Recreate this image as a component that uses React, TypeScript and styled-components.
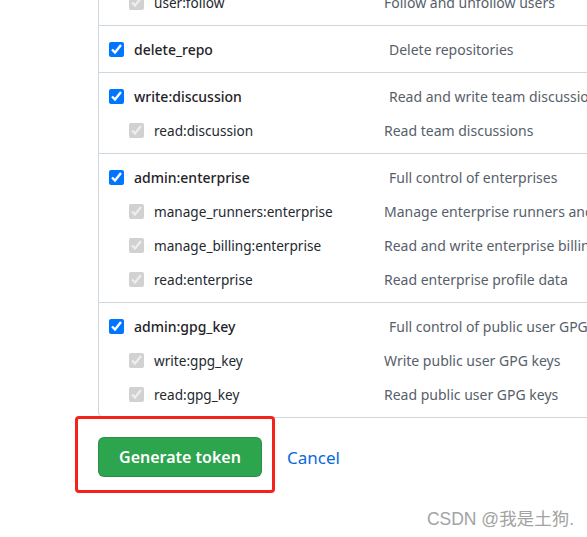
import React from "react";
import styled, { createGlobalStyle } from "styled-components";

const GlobalStyle = createGlobalStyle`
  html, body {
    margin: 0;
    padding: 0;
    background: #ffffff;
    overflow: hidden;
  }
  body {
    font-family: "Noto Sans", "Noto Sans CJK SC", sans-serif;
    color: #24292f;
  }
`;

type Scope = { name: string; desc: string; children?: { name: string; desc: string }[] };

const scopes: Scope[] = [
  {
    name: "user",
    desc: "Update ALL user data",
    children: [
      { name: "read:user", desc: "Read ALL user profile data" },
      { name: "user:email", desc: "Access user email addresses (read-only)" },
      { name: "user:follow", desc: "Follow and unfollow users" },
    ],
  },
  { name: "delete_repo", desc: "Delete repositories" },
  {
    name: "write:discussion",
    desc: "Read and write team discussions",
    children: [{ name: "read:discussion", desc: "Read team discussions" }],
  },
  {
    name: "admin:enterprise",
    desc: "Full control of enterprises",
    children: [
      { name: "manage_runners:enterprise", desc: "Manage enterprise runners and runner groups" },
      { name: "manage_billing:enterprise", desc: "Read and write enterprise billing data" },
      { name: "read:enterprise", desc: "Read enterprise profile data" },
    ],
  },
  {
    name: "admin:gpg_key",
    desc: "Full control of public user GPG keys",
    children: [
      { name: "write:gpg_key", desc: "Write public user GPG keys" },
      { name: "read:gpg_key", desc: "Read public user GPG keys" },
    ],
  },
];

const Page = styled.div`
  position: relative;
  display: flow-root;
  width: 587px;
  height: 537px;
  padding-left: 98px;
  box-sizing: border-box;
`;

const ScopeBox = styled.div`
  width: 720px;
  margin-top: -124px;
  border: 1px solid #d0d7de;
  border-radius: 6px;
`;

const Group = styled.div`
  padding: 6px 0;
  & + & {
    border-top: 1px solid #d0d7de;
  }
`;

const Row = styled.div<{ $child?: boolean }>`
  display: flex;
  align-items: center;
  height: 34px;
  padding-left: ${(p) => (p.$child ? "30px" : "10px")};
  font-size: 14px;
`;

const Check = styled.input`
  width: 15px;
  height: 15px;
  margin: 0 10px 0 0;
  flex: none;
`;

const Name = styled.span<{ $child?: boolean }>`
  width: ${(p) => (p.$child ? "230px" : "255px")};
  flex: none;
  font-size: ${(p) => (p.$child ? "13.6px" : "14px")};
  font-weight: ${(p) => (p.$child ? 400 : 500)};
  color: ${(p) => (p.$child ? "#24292f" : "#1f2328")};
`;

const Desc = styled.span`
  color: #57606a;
  white-space: nowrap;
`;

const Actions = styled.div`
  position: relative;
  display: flex;
  align-items: center;
  gap: 25px;
  margin-top: 19px;
`;

const GenerateButton = styled.button`
  width: 164px;
  height: 40px;
  border: 1px solid rgba(27, 31, 36, 0.15);
  border-radius: 6px;
  background: #2da44e;
  color: #ffffff;
  font-family: "Noto Sans", sans-serif;
  font-size: 16px;
  font-weight: 600;
  cursor: pointer;
`;

const CancelLink = styled.a`
  color: #0969da;
  font-size: 17px;
  text-decoration: none;
`;

const Highlight = styled.div`
  position: absolute;
  left: -23px;
  top: -21px;
  width: 200px;
  height: 77px;
  box-sizing: border-box;
  border: 3px solid #f5221b;
  border-radius: 4px;
  pointer-events: none;
`;

const Watermark = styled.div`
  position: absolute;
  right: 13px;
  bottom: 7px;
  font-family: "Liberation Sans", "Noto Sans CJK SC", sans-serif;
  font-size: 17.5px;
  color: #a3a3a3;
  text-shadow: 0 0 1px #ffffff;
`;

export default function App() {
  return (
    <>
      <GlobalStyle />
      <Page>
        <ScopeBox>
          {scopes.map((s) => (
            <Group key={s.name}>
              <Row>
                <Check type="checkbox" checked readOnly />
                <Name>{s.name}</Name>
                <Desc>{s.desc}</Desc>
              </Row>
              {s.children?.map((c) => (
                <Row $child key={c.name}>
                  <Check type="checkbox" checked disabled readOnly />
                  <Name $child>{c.name}</Name>
                  <Desc>{c.desc}</Desc>
                </Row>
              ))}
            </Group>
          ))}
        </ScopeBox>
        <Actions>
          <Highlight />
          <GenerateButton type="button">Generate token</GenerateButton>
          <CancelLink href="#">Cancel</CancelLink>
        </Actions>
        <Watermark>CSDN @我是土狗.</Watermark>
      </Page>
    </>
  );
}
